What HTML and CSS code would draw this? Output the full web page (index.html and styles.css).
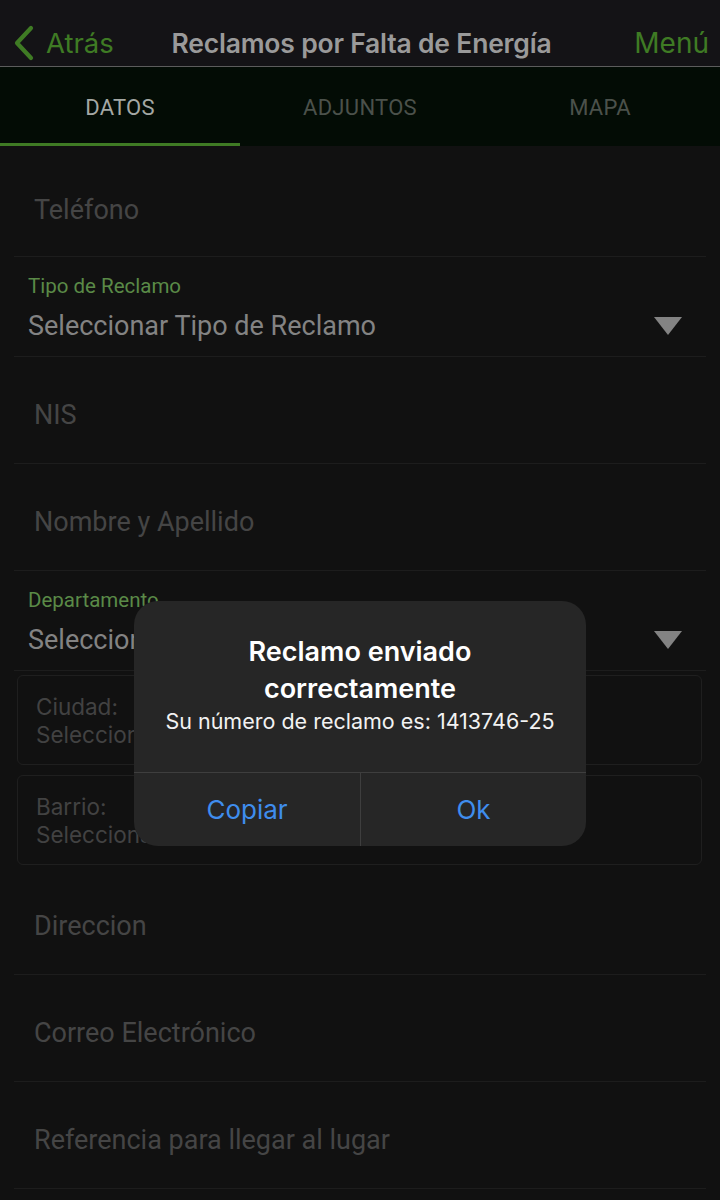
FILE: index.html
```html
<!DOCTYPE html>
<html>
  <head>
    <title>Reclamos por Falta de Energía</title>
    <link rel="stylesheet" href="styles.css">
  </head>
  <body>

    <nav class="top-bar">
      <a class="back">
        <svg class="back-chevron" width="20" height="36" viewBox="0 0 20 36">
          <polyline points="17,3 3,18 17,33" fill="none" stroke="currentColor" stroke-width="4.2" stroke-linecap="round" stroke-linejoin="round"/>
        </svg>
        <span>Atrás</span>
      </a>
      <strong class="title">Reclamos por Falta de Energía</strong>
      <a class="menu">Menú</a>
    </nav>

    <div class="tabs">
      <div class="tab tab-active">DATOS</div>
      <div class="tab">ADJUNTOS</div>
      <div class="tab">MAPA</div>
    </div>

    <main class="form">
      <div class="field field-first">Teléfono</div>

      <div class="picker">
        <label>Tipo de Reclamo</label>
        <div class="picker-value">
          <span>Seleccionar Tipo de Reclamo</span>
          <i class="caret"></i>
        </div>
      </div>

      <div class="field">NIS</div>
      <div class="field">Nombre y Apellido</div>

      <div class="picker">
        <label>Departamento</label>
        <div class="picker-value">
          <span>Seleccionar Departamento</span>
          <i class="caret"></i>
        </div>
      </div>

      <div class="box">
        <span>Ciudad:</span>
        <span>Seleccionar Ciudad</span>
      </div>
      <div class="box">
        <span>Barrio:</span>
        <span>Seleccionar Barrio</span>
      </div>

      <div class="field">Direccion</div>
      <div class="field">Correo Electrónico</div>
      <div class="field">Referencia para llegar al lugar</div>
    </main>

    <div class="alert">
      <div class="alert-body">
        <h2>Reclamo enviado correctamente</h2>
        <p>Su número de reclamo es: 1413746-25</p>
      </div>
      <div class="alert-actions">
        <button>Copiar</button>
        <button>Ok</button>
      </div>
    </div>

  </body>
</html>
```

FILE: styles.css
```css
*,
*:before,
*:after {
  box-sizing: border-box;
}

html,
body {
  height: 100%;
}

body {
  margin: 0px;
  background: #111111;
  color: #454545;
  font-family: Roboto, 'Noto Sans', sans-serif;
  overflow: hidden;
  position: relative;
}

/* Top bar */

.top-bar {
  display: grid;
  grid-template-columns: 1fr auto 1fr;
  align-items: center;
  height: 67px;
  padding: 20px 11px 0px 14px;
  background: #141316;
  border-bottom: 1px solid #5c5c5c;
}

.back {
  display: flex;
  align-items: center;
  gap: 12px;
  color: #3f7b24;
  font-family: Inter, 'Noto Sans', sans-serif;
  font-size: 27.5px;
}

.back-chevron {
  display: block;
}

.title {
  color: #9a9a9a;
  font-family: Inter, 'Noto Sans', sans-serif;
  font-size: 26.5px;
  font-weight: 600;
  letter-spacing: -0.2px;
}

.menu {
  justify-self: end;
  color: #3f7b24;
  font-family: Inter, 'Noto Sans', sans-serif;
  font-size: 28px;
}

/* Tabs */

.tabs {
  display: grid;
  grid-template-columns: repeat(3, 1fr);
  height: 79px;
  background: #030c05;
}

.tab {
  display: flex;
  align-items: center;
  justify-content: center;
  color: #4b514b;
  font-size: 22px;
  letter-spacing: 0.3px;
  border-bottom: 3px solid transparent;
  padding-top: 5px;
}

.tab-active {
  color: #a4a8a4;
  border-bottom-color: #3f7b24;
}

/* Form */

.form {
  padding: 0px 14px;
}

.field {
  height: 107px;
  padding: 42px 0px 0px 20px;
  font-size: 27px;
  border-bottom: 1px solid #1d1d1d;
}

.field-first {
  height: 111px;
  padding-top: 48px;
}

.picker {
  height: 100px;
  padding: 17px 24px 0px 14px;
  border-bottom: 1px solid #1d1d1d;
}

.picker label {
  display: block;
  color: #5a8a47;
  font-size: 20.5px;
}

.picker-value {
  display: flex;
  align-items: center;
  justify-content: space-between;
  margin-top: 12px;
  color: #838383;
  font-size: 27px;
}

.caret {
  width: 0px;
  height: 0px;
  border-left: 14px solid transparent;
  border-right: 14px solid transparent;
  border-top: 18px solid #838383;
  margin-top: 0px;
}

.box {
  display: flex;
  flex-direction: column;
  height: 90px;
  margin: 4px 4px 10px 3px;
  padding: 17px 18px 0px;
  border: 1.5px solid #1f1f1f;
  border-radius: 6px;
  font-family: Inter, 'Noto Sans', sans-serif;
  font-size: 22.5px;
  line-height: 28px;
  color: #424242;
}

.box + .box {
  margin-top: 0px;
}

.box + .field {
  margin-top: -7px;
}

/* Alert */

.alert {
  position: absolute;
  top: 601px;
  left: 134px;
  width: 452px;
  background: #262626;
  border-radius: 24px;
  overflow: hidden;
  font-family: Inter, 'Noto Sans', sans-serif;
  text-align: center;
}

.alert-body {
  padding: 32px 16px 37px;
}

.alert h2 {
  margin: 0px;
  color: #ffffff;
  font-size: 27px;
  font-weight: 600;
  line-height: 37px;
  padding: 0px 60px;
}

.alert p {
  margin: 0px;
  color: #f2f2f2;
  font-size: 21.5px;
  line-height: 28px;
}

.alert-actions {
  display: grid;
  grid-template-columns: 1fr 1fr;
  border-top: 1px solid #3e3e3e;
}

.alert-actions button {
  height: 73px;
  background: transparent;
  border: 0px;
  color: #3f8ded;
  font-family: Inter, 'Noto Sans', sans-serif;
  font-size: 26px;
}

.alert-actions button + button {
  border-left: 1px solid #3e3e3e;
}
```
